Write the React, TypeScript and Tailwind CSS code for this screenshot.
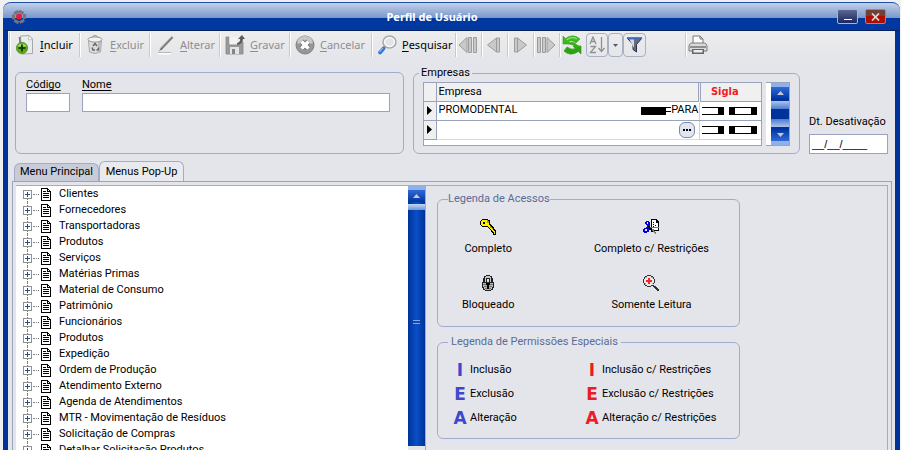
import type { ReactNode } from 'react';

const treeItems = [
  'Clientes',
  'Fornecedores',
  'Transportadoras',
  'Produtos',
  'Serviços',
  'Matérias Primas',
  'Material de Consumo',
  'Patrimônio',
  'Funcionários',
  'Produtos',
  'Expedição',
  'Ordem de Produção',
  'Atendimento Externo',
  'Agenda de Atendimentos',
  'MTR - Movimentação de Resíduos',
  'Solicitação de Compras',
  'Detalhar Solicitação Produtos',
];

const permissions = [
  { letter: 'I', label: 'Inclusão' },
  { letter: 'E', label: 'Exclusão' },
  { letter: 'A', label: 'Alteração' },
];

/* ---------- Toolbar icons ---------- */

function AddIcon() {
  return (
    <svg width="18" height="20" viewBox="0 0 18 20">
      <path d="M4.500 1 13 .5 16.500 4v14.500l-11 .5z" fill="#e9ecec" stroke="#a5aaaa" />
      <path d="M13 .5 12.500 5l4-.5z" fill="#fff" stroke="#a5aaaa" strokeWidth=".7" />
      <path d="m3.500 2 1 9" stroke="#777" strokeWidth="1.600" />
      <circle cx="6" cy="13" r="5.700" fill="#5aad16" stroke="#3f8410" strokeWidth=".6" />
      <path d="M1.500 11a5 4 0 0 1 9 0q-4 2-9 0z" fill="#b7e67a" opacity=".8" />
      <path d="M6 9.500v7M2.500 13h7" stroke="#1f3d0b" strokeWidth="2" />
    </svg>
  );
}

function TrashIcon() {
  return (
    <svg width="16" height="20" viewBox="0 0 16 20">
      <path d="M1.500 5.500 2.500 17q5.500 3 11 0l1-11.500z" fill="#dcdcdc" stroke="#a8a8a8" />
      <path d="M11 6h3l-1 11-2 1z" fill="#bcbcbc" />
      <ellipse cx="8" cy="4.500" rx="7" ry="2.600" fill="#f3f3f3" stroke="#999" />
      <path d="M5.500 2.500q0-2 2.500-2t2.500 2" fill="none" stroke="#999" />
      <path d="m6 11 2-2.500L10 11M5 12.500 6 15h2m1.500 0H11l.7-2.500" fill="none" stroke="#666" strokeWidth="1.500" />
    </svg>
  );
}

function EditIcon() {
  return (
    <svg width="17" height="19" viewBox="0 0 17 19">
      <path d="M15.500 1 4 13" stroke="#7d7d7d" strokeWidth="2.400" />
      <path d="M14.500.5 3 12.500" stroke="#c4c4c4" />
      <path d="m4.500 12-3 3.500 3.700-2.300z" fill="#555" />
      <path d="M1 17.500h13" stroke="#fff" strokeWidth="2" />
      <path d="M1 16.500h13" stroke="#b5b5b5" />
    </svg>
  );
}

function SaveIcon() {
  return (
    <svg width="20" height="20" viewBox="0 0 20 20">
      <path d="M1 2h3v8h10V7h4v12H1z" fill="#9a9a9a" stroke="#858585" strokeWidth=".8" />
      <path d="M4.500 2h8v7h-8z" fill="#f3f3f3" />
      <path d="M5 12h9v7H5z" fill="#e4e4e4" />
      <path d="M7 14h3v5H7z" fill="#858585" />
      <path d="M12 8q4-1 3-4h-2L17 0l3 4h-2q0 5-6 6z" fill="#5b5b5b" />
    </svg>
  );
}

function CancelIcon() {
  return (
    <svg width="20" height="20" viewBox="0 0 20 20">
      <circle cx="10" cy="10" r="9" fill="#979797" stroke="#808080" />
      <path d="M2 8a8 7 0 0 1 16 0q-8 4-16 0z" fill="#c8c8c8" />
      <path d="m6.500 6.500 7 7m0-7-7 7" stroke="#757575" strokeWidth="5.500" />
      <path d="m6.500 6.500 7 7m0-7-7 7" stroke="#fff" strokeWidth="3.600" />
    </svg>
  );
}

function SearchIcon() {
  return (
    <svg width="19" height="20" viewBox="0 0 19 20">
      <path d="M7.500 11 6 13" stroke="#777" strokeWidth="2" />
      <path d="m5.500 13.500-3.500 4" stroke="#2f6fdc" strokeWidth="3.600" strokeLinecap="round" />
      <path d="m5 13-3.500 4" stroke="#7eb0f2" strokeWidth="1.300" />
      <ellipse cx="11.500" cy="7" rx="6.500" ry="6" fill="#eceff2" stroke="#a5a9ad" strokeWidth="1.500" />
      <ellipse cx="11.500" cy="7" rx="4.800" ry="4.300" fill="#e0e4e8" stroke="#fff" />
    </svg>
  );
}

function NavIcon({ double, flip }: { double?: boolean; flip?: boolean }) {
  return (
    <svg width="20" height="18" viewBox="0 0 20 18" className={flip ? '-scale-x-100' : ''}>
      <g fill="#c9c9c9" stroke="#9c9c9c" strokeLinejoin="round">
        {double ? (
          <>
            <path d="m1 9 8-7.500v15z" />
            <path d="M10.500 1.500h3v15h-3zM15.500 1.500h3v15h-3z" />
          </>
        ) : (
          <>
            <path d="m3.500 9 9-7v14z" />
            <path d="M12.500 2h3v14h-3z" />
          </>
        )}
      </g>
    </svg>
  );
}

function RefreshIcon() {
  return (
    <svg width="20" height="20" viewBox="0 0 20 20">
      <path d="M1 1v8h8L6.500 6.500Q10 4.500 14 8l4-4Q11-2 3.500 3.500z" fill="#3fb51f" stroke="#35a41f" strokeWidth=".6" />
      <path d="M19 19v-8h-8l2.500 2.500Q10 15.500 5 12l-3 4q6 6 14.500.5z" fill="#2ca312" stroke="#249310" strokeWidth=".6" />
      <path d="M9 7q4 0 5 2l5 3-5 1q-1-3-8-4z" fill="#35ad1a" />
      <path d="M4.500 5Q10 1 15 4" fill="none" stroke="#8be56b" strokeWidth="1.300" />
    </svg>
  );
}

function SortIcon() {
  return (
    <svg width="17" height="18" viewBox="0 0 17 18">
      <path d="m1 8 3-7 3 7M2 5.500h4M1.500 10.500h5l-5 6H7" fill="none" stroke="#8e9096" strokeWidth="1.300" />
      <path d="M12.500 1v14M9.500 12l3 3.500 3-3.500" fill="none" stroke="#8e9096" strokeWidth="1.300" />
    </svg>
  );
}

function FilterIcon() {
  return (
    <svg width="17" height="16" viewBox="0 0 17 16">
      <path d="M1 1h15l-5.500 6.500V15L7 12.500v-5z" fill="#666d78" stroke="#26324a" />
      <path d="M1 1h15" stroke="#3f76e0" strokeWidth="1.500" />
      <path d="M3.500 2.500H8V11z" fill="#d4dae6" />
    </svg>
  );
}

function PrinterIcon() {
  return (
    <svg width="20" height="20" viewBox="0 0 20 20">
      <path d="M5 9V1h7l3 3v5" fill="#fdfdfd" stroke="#777" />
      <path d="M12 1v3h3" fill="none" stroke="#777" />
      <path d="M3.500 8h13q2.500 1 2.500 3v5H1v-5q0-2 2.500-3z" fill="#dadada" stroke="#7b7b7b" />
      <path d="M2 11h16v2H2z" fill="#8f8f8f" />
      <path d="M4 14h12v5H4z" fill="#666" />
      <path d="M5.500 15h9v2.500h-9z" fill="#eee" />
    </svg>
  );
}

/* ---------- Legend and tree icons ---------- */

function KeyIcon() {
  return (
    <svg width="16" height="16" viewBox="0 0 16 16" shapeRendering="crispEdges">
      <path d="M2 0h6v1h2v4h1v1h1v1h1v1h1v2h1v1h1v5h-3v-2h-1v-1h-1v-2h-1v-1H9V9H8V8H2V7H1V6H0V2h1V1h1z" fill="#000" />
      <path d="M2 1h6v1h1v4h1v1h1v1h1v1h1v2h1v1h1v3h-1v-2h-1v-1h-1v-1h-1v-1h-1V9H9V8H8V7H2V6H1V2h1z" fill="#ffee00" />
      <path d="M3 3h2v2H3z" fill="#000" />
      <path d="M7 1h1v1h1v2H7zM10 7h1v1h1v1h1v1h-1V9h-2z" fill="#a39b00" />
    </svg>
  );
}

function LockIcon() {
  return (
    <svg width="14" height="16" viewBox="0 0 14 16" shapeRendering="crispEdges">
      <path d="M5 0h4v1h2v2h1v4h1v6h-1v2h-2v1H4v-1H2v-2H1V7h1V3h1V1h2z" fill="#222" />
      <path d="M5 1h4v1h1v5H9V3H5v4H4V2h1z" fill="#c8c8c8" />
      <path d="M5 3h4v4H5z" fill="#e4e5ea" />
      <path d="M5 3h4v1H5zM5 3h1v4H5zM8 3h1v4H8z" fill="#222" />
      <path d="M2 8h10v4h-1v2h-1v1H4v-1H3v-2H2z" fill="#b8b8b8" />
      <path d="M2 9h3v1H2zM9 9h3v1H9zM3 11h3v1H3zM8 11h3v1H8zM4 13h2v1H4zM8 13h2v1H8z" fill="#757575" />
      <path d="M5 8h4v2H8v4H6v-4H5z" fill="#000" />
    </svg>
  );
}

function ScissorsIcon() {
  return (
    <svg width="16" height="16" viewBox="0 0 16 16" shapeRendering="crispEdges">
      <path d="M8 0h6v1h1v1h1v10H8z" fill="#000" />
      <path d="M9 1h4v3h2v7H9z" fill="#fff" />
      <path d="M10 3h1v1h-1zM10 5h1v1h-1zM12 6h1v1h-1zM10 7h1v1h-1z" fill="#000" />
      <path d="M6 8h10v1H6zM9 10h2v2h1v1h1v2h-1v-1h-1v-1h-1v-1H9z" fill="#777" />
      <path d="M5 7h2v2h2v3h1v1H8v-2H6V9H5z" fill="#000" />
      <path d="M3 2h3v1h1v4H5v1h1v5H4v1H1v-1H0v-3h1V9h2V8h1V6H3V5H2V3h1zm1 1v2h1V3zM2 10v2h2v-2z" fill="#0000d8" />
    </svg>
  );
}

function ZoomInIcon() {
  return (
    <svg width="16" height="16" viewBox="0 0 16 16" shapeRendering="crispEdges">
      <path d="M4 0h4v1h2v1h1v2h1v4h-1v2h1v1h1v1h1v1h1v1h1v2h-2v-1h-1v-1h-1v-1h-1v-1h-1v-1H8v1H4v-1H2v-1H1V8H0V4h1V2h1V1h2z" fill="#333" />
      <path d="M4 1h4v1h2v2h1v4h-1v2H8v1H4v-1H2V8H1V4h1V2h2z" fill="#e8e8e8" />
      <path d="M2 2h2v1H2zM8 2h2v1H8zM2 8h1v2H2zM9 8h1v1H9z" fill="#aaa" />
      <path d="M5 3h2v6H5zM3 5h6v2H3z" fill="#f22" />
      <path d="M10 9h1v1h1v1h-1v-1h-1z" fill="#ffe600" />
    </svg>
  );
}

function PageIcon() {
  return (
    <svg width="11" height="13" viewBox="0 0 11 13" shapeRendering="crispEdges" className="shrink-0">
      <path d="M0 0h7v1h1v1h1v1h1v10H0z" fill="#000" />
      <path d="M1 1h5v3h3v8H1z" fill="#fff" />
      <path d="M7 2h1v1H7z" fill="#fff" />
      <path d="M2 3h3v1H2zM2 5h6v1H2zM2 7h6v1H2zM2 9h6v1H2z" fill="#000" />
    </svg>
  );
}

/* ---------- Building blocks ---------- */

function ToolButton({ icon, label, width, disabled }: { icon: ReactNode; label: string; width: string; disabled?: boolean }) {
  return (
    <button
      type="button"
      disabled={disabled}
      className={`flex h-6 shrink-0 items-center gap-[5px] border-l border-white pl-1 shadow-[-1px_0_#c9c9cf] ${width} ${
        disabled ? 'text-[#8e8e92]' : 'text-black'
      }`}
    >
      <span className="flex w-5 shrink-0 justify-center">{icon}</span>
      <span className="whitespace-nowrap">
        <span className="underline underline-offset-2">{label[0]}</span>
        {label.slice(1)}
      </span>
    </button>
  );
}

function NavButton({ title, children }: { title: string; children: ReactNode }) {
  return (
    <button
      type="button"
      aria-label={title}
      className="flex h-6 w-[26px] shrink-0 items-center justify-center border-l border-white pr-1 shadow-[-1px_0_#c9c9cf]"
    >
      {children}
    </button>
  );
}

function ScrollArrow({ down }: { down?: boolean }) {
  return (
    <button
      type="button"
      aria-label={down ? 'Rolar para baixo' : 'Rolar para cima'}
      className={`flex h-4 w-full shrink-0 items-center justify-center border-[#8fb0e8] bg-linear-to-b ${
        down ? 'border-b-4 from-[#0034a0] to-[#2f6ad8]' : 'border-t-4 from-[#2f6ad8] to-[#0034a0]'
      }`}
    >
      <svg width="7" height="4" viewBox="0 0 7 4">
        <path d={down ? 'M0 0h7L3.500 4z' : 'M0 4h7L3.500 0z'} fill="#c5cad8" />
      </svg>
    </button>
  );
}

function MaskedSigla() {
  return (
    <svg width="56" height="8" viewBox="0 0 56 8" shapeRendering="crispEdges">
      <path d="M0 0h22v8H0V7h16V1H0zM27 0h28v8H27zM33 1v6h16V1z" fill="#000" fillRule="evenodd" />
    </svg>
  );
}

function RowMarker() {
  return (
    <svg width="5" height="9" viewBox="0 0 5 9" className="mx-auto">
      <path d="M0 0v9l5-4.500z" fill="#000" />
    </svg>
  );
}

function AccessItem({ icon, label }: { icon: ReactNode; label: string }) {
  return (
    <div className="flex flex-col items-center gap-1.5">
      {icon}
      <span className="leading-4 whitespace-nowrap">{label}</span>
    </div>
  );
}

function PermissionList({ color, suffix }: { color: string; suffix: string }) {
  return (
    <ul>
      {permissions.map((p) => (
        <li key={p.letter} className="flex h-6 items-center gap-1">
          <b className={`flex w-3 justify-center font-['DejaVu_Sans',sans-serif] text-[17px] leading-5 ${color}`}>{p.letter}</b>
          <span className="whitespace-nowrap">
            {p.label}
            {suffix}
          </span>
        </li>
      ))}
    </ul>
  );
}

/* ---------- Window sections ---------- */

function TitleBar() {
  return (
    <header className="flex h-7 shrink-0 items-center rounded-t-lg border-t border-[#1c4fa8] bg-linear-to-b from-[#c3d0e8] from-0% via-[#7896ca] via-56% to-[#00389f] to-56% px-2">
      <svg width="16" height="16" viewBox="0 0 16 16">
        <path d="M8 2 13.500 5v6L8 14 2.500 11V5z" fill="none" stroke="#70757f" strokeWidth="3" strokeDasharray="5 1.300" />
        <circle cx="8" cy="7.500" r="3" fill="#e21f3a" />
      </svg>
      <h1 className="flex-1 text-center font-['Noto_Sans',sans-serif] text-[11px] leading-4 font-bold text-white">
        Perfil de Usuário
      </h1>
      <div className="flex gap-[7px] pr-1.5">
        <button
          type="button"
          aria-label="Minimizar"
          className="flex h-[15px] w-[21px] items-end justify-center rounded-xs border border-[#a5b4d8] bg-linear-to-b from-[#5d6793] to-[#20265c] pb-[3px]"
        >
          <span className="h-px w-2 bg-white" />
        </button>
        <button
          type="button"
          aria-label="Fechar"
          className="flex h-[15px] w-[21px] items-center justify-center rounded-xs border border-[#7590c0] bg-linear-to-b from-[#704039] from-50% to-[#b00d00] to-50%"
        >
          <svg width="9" height="8" viewBox="0 0 9 8">
            <path d="m1 .5 7 7m0-7-7 7" stroke="#ddd" strokeWidth="1.700" />
          </svg>
        </button>
      </div>
    </header>
  );
}

function Toolbar() {
  return (
    <div
      role="toolbar"
      className="flex h-7 shrink-0 items-center bg-linear-to-b from-[#ededed] to-[#e4e5ea] pl-0.5 font-['Noto_Sans',sans-serif] text-[11px]"
    >
      <ToolButton icon={<AddIcon />} label="Incluir" width="w-[70px]" />
      <ToolButton icon={<TrashIcon />} label="Excluir" width="w-[70px]" disabled />
      <ToolButton icon={<EditIcon />} label="Alterar" width="w-[70px]" disabled />
      <ToolButton icon={<SaveIcon />} label="Gravar" width="w-[70px]" disabled />
      <ToolButton icon={<CancelIcon />} label="Cancelar" width="w-[82px]" disabled />
      <ToolButton icon={<SearchIcon />} label="Pesquisar" width="w-[84px]" />
      <NavButton title="Primeiro"><NavIcon double /></NavButton>
      <NavButton title="Anterior"><NavIcon /></NavButton>
      <NavButton title="Próximo"><NavIcon flip /></NavButton>
      <NavButton title="Último"><NavIcon double flip /></NavButton>
      <NavButton title="Atualizar"><RefreshIcon /></NavButton>
      <div className="flex h-6 shrink-0">
        <button type="button" aria-label="Ordenar" className="flex w-[22px] items-center justify-center rounded-sm border border-[#a9b0c2]">
          <SortIcon />
        </button>
        <button type="button" aria-label="Opções de ordem" className="flex w-[15px] items-center justify-center rounded-sm border border-[#a9b0c2]">
          <svg width="5" height="3" viewBox="0 0 5 3">
            <path d="M0 0h5L2.500 3z" fill="#555b70" />
          </svg>
        </button>
        <button type="button" aria-label="Filtrar" className="flex w-[23px] items-center justify-center rounded-sm border border-[#a9b0c2]">
          <FilterIcon />
        </button>
      </div>
      <div className="ml-10 flex">
        <NavButton title="Imprimir"><PrinterIcon /></NavButton>
      </div>
    </div>
  );
}

function CompanyTable() {
  return (
    <div className="flex h-[64px]">
      <div className="min-w-0 flex-1 border border-[#9aa3bd] bg-white">
        <table className="w-full table-fixed border-collapse">
          <thead>
            <tr className="h-[18px] bg-[#f0f0f0] text-left">
              <th className="w-3 border-r border-b border-[#9aa3bd]" />
              <th className="border-b border-[#9aa3bd] px-0.5 font-normal">Empresa</th>
              <th className="w-[62px] border-b border-l-3 border-double border-[#9aa3bd] pr-3 text-center font-['DejaVu_Sans_Condensed','DejaVu_Sans',sans-serif] font-bold text-[#ed1c24]">
                Sigla
              </th>
            </tr>
          </thead>
          <tbody>
            <tr className="h-[19px]">
              <td className="border-r border-b border-[#9aa3bd] bg-[#f0f0f0]"><RowMarker /></td>
              <td className="border-b border-[#9aa3bd] pl-0.5">
                <div className="flex items-center justify-between overflow-hidden">
                  <span>PROMODENTAL</span>
                  <span className="flex h-4 items-center">
                    <svg width="30" height="8" viewBox="0 0 30 8" shapeRendering="crispEdges" className="shrink-0">
                      <path d="M0 0h30v1h-5v3h5v1h-5v3H0z" />
                    </svg>
                    <span>PARA</span>
                  </span>
                </div>
              </td>
              <td className="border-b border-l border-[#9aa3bd] border-l-[#d0d3dc] pl-0.5"><MaskedSigla /></td>
            </tr>
            <tr className="h-[19px]">
              <td className="border-r border-b border-[#9aa3bd] bg-[#f0f0f0]"><RowMarker /></td>
              <td className="border-b border-[#d8dbe4] pr-1">
                <button
                  type="button"
                  aria-label="Selecionar empresa"
                  className="ml-auto flex h-4 w-4 items-center justify-center gap-px rounded-md border border-[#7c89a8] bg-[#e2e6f0]"
                >
                  <span className="size-0.5 bg-black" />
                  <span className="size-0.5 bg-black" />
                  <span className="size-0.5 bg-black" />
                </button>
              </td>
              <td className="border-b border-l border-[#d0d3dc] pl-0.5"><MaskedSigla /></td>
            </tr>
          </tbody>
        </table>
      </div>
      <div className="ml-1 flex w-6 flex-col border-y border-r border-[#9aa3bd] bg-white pl-[5px]">
        <ScrollArrow />
        <div className="flex flex-1 flex-col justify-between bg-[#003399] py-0.5">
          <div className="h-2 bg-linear-to-b from-[#aec4ea] to-[#4d7bd0]" />
          <div className="h-2 bg-linear-to-b from-[#4d7bd0] to-[#aec4ea]" />
        </div>
        <ScrollArrow down />
      </div>
    </div>
  );
}

function RecordForm() {
  return (
    <form className="flex shrink-0 items-end gap-[9px] px-[7px] pt-2">
      <div className="flex h-[82px] flex-1 items-start gap-3 rounded-md border border-[#a3abc8] px-2.5 pt-1">
        <div className="flex w-[44px] flex-col">
          <label htmlFor="codigo" className="leading-4 underline underline-offset-2">Código</label>
          <input id="codigo" className="h-[19px] w-full border border-[#9ba2c0] bg-white px-1" />
        </div>
        <div className="flex flex-1 flex-col pr-[3px]">
          <label htmlFor="nome" className="leading-4 underline underline-offset-2">Nome</label>
          <input id="nome" className="h-[19px] w-full border border-[#9ba2c0] bg-white px-1" />
        </div>
      </div>
      <fieldset className="h-[87px] min-w-0 flex-1 rounded-md border border-[#a3abc8] px-[9px]">
        <legend className="-ml-1 px-0.5 leading-3">Empresas</legend>
        <div className="pt-[3px]">
          <CompanyTable />
        </div>
      </fieldset>
      <div className="flex w-[79px] shrink-0 flex-col">
        <label htmlFor="desativacao" className="pb-1 leading-4 whitespace-nowrap">Dt. Desativação</label>
        <input
          id="desativacao"
          defaultValue="__/__/____"
          className="h-5 w-full border border-[#9ba2c0] bg-white px-0.5 font-['Liberation_Sans',sans-serif]"
        />
      </div>
    </form>
  );
}

function MenuTree() {
  return (
    <ul className="min-w-0 flex-1 overflow-hidden bg-white">
      {treeItems.map((item, i) => (
        <li key={i} className="flex h-4 items-center pl-[7px]">
          <div className="flex h-4 w-[9px] flex-col items-center">
            <span className={`flex-1 border-l border-dotted ${i === 0 ? 'border-transparent' : 'border-[#808080]'}`} />
            <button
              type="button"
              aria-label={`Expandir ${item}`}
              className="flex size-[9px] shrink-0 items-center justify-center border border-[#919191] bg-white"
            >
              <svg width="5" height="5" viewBox="0 0 5 5" shapeRendering="crispEdges">
                <path d="M2 0h1v2h2v1H3v2H2V3H0V2h2z" fill="#2a4a9a" />
              </svg>
            </button>
            <span className="flex-1 border-l border-dotted border-[#808080]" />
          </div>
          <span className="mr-0.5 ml-px w-1.5 border-t border-dotted border-[#808080]" />
          <PageIcon />
          <span className="ml-[7px] whitespace-nowrap">{item}</span>
        </li>
      ))}
    </ul>
  );
}

function Legends() {
  return (
    <div className="w-[462px] shrink-0 border-l border-[#a3abc8] pt-[7px] pl-[11px]">
      <fieldset className="h-[134px] w-[303px] rounded-md border border-[#a3abc8]">
        <legend className="ml-2.5 leading-3 text-[#596c96]">Legenda de Acessos</legend>
        <div className="flex justify-between pt-3.5 pr-6 pl-6">
          <div className="flex flex-col gap-[18px]">
            <AccessItem icon={<KeyIcon />} label="Completo" />
            <AccessItem icon={<LockIcon />} label="Bloqueado" />
          </div>
          <div className="flex flex-col gap-[18px] pr-1.5">
            <AccessItem icon={<ScissorsIcon />} label="Completo c/ Restrições" />
            <AccessItem icon={<ZoomInIcon />} label="Somente Leitura" />
          </div>
        </div>
      </fieldset>
      <fieldset className="mt-[9px] h-[103px] w-[303px] rounded-md border border-[#a3abc8]">
        <legend className="ml-2.5 px-[3px] leading-3 text-[#596c96]">Legenda de Permissões Especiais</legend>
        <div className="grid grid-cols-[132px_1fr] pt-2.5 pl-4">
          <PermissionList color="text-[#3f48cc]" suffix="" />
          <PermissionList color="text-[#ed1c24]" suffix=" c/ Restrições" />
        </div>
      </fieldset>
    </div>
  );
}

export default function App() {
  return (
    <div className="flex h-screen flex-col overflow-hidden bg-[#f0f0f0] pt-0.5 pr-px pl-[3px] font-['Roboto','Liberation_Sans',sans-serif] text-[11px] text-black">
      <TitleBar />
      <main className="flex min-h-0 flex-1 flex-col border-x-5 border-t border-[#003399] border-t-[#00205f] bg-[#e4e5ea]">
        <Toolbar />
        <RecordForm />

        {/* Tabs */}
        <div role="tablist" className="mt-[7px] flex shrink-0 items-end pl-1.5">
          <button type="button" role="tab" aria-selected="false" className="h-[18px] w-[85px] rounded-t-md border border-b-0 border-[#a3abc8] bg-[#c8ccd8]">
            Menu Principal
          </button>
          <button type="button" role="tab" aria-selected="true" className="-mb-px h-[21px] w-[85px] rounded-t-md border border-b-0 border-[#a3abc8] bg-[#e9eaee]">
            Menus Pop-Up
          </button>
        </div>

        {/* Tab content */}
        <div className="mr-[3px] ml-1 flex min-h-0 flex-1 border border-b-0 border-[#9aa3c0] px-[3px] pt-[3px]">
          <div className="flex min-h-0 flex-1 border-t border-r border-[#a3abc8]">
            <MenuTree />
            <div className="mb-1 flex w-[17px] shrink-0 flex-col bg-linear-to-r from-[#003399] via-[#0b4fc8] to-[#003399]">
              <ScrollArrow />
              <div className="mt-0.5 h-1.5 bg-linear-to-b from-[#c6d5f0] to-[#6f95da]" />
              <div className="flex flex-1 flex-col items-center justify-center gap-0.5 pb-3">
                <span className="h-px w-[7px] bg-[#8ba6dc]" />
                <span className="h-px w-[7px] bg-[#8ba6dc]" />
              </div>
            </div>
            <Legends />
          </div>
        </div>
      </main>
    </div>
  );
}
